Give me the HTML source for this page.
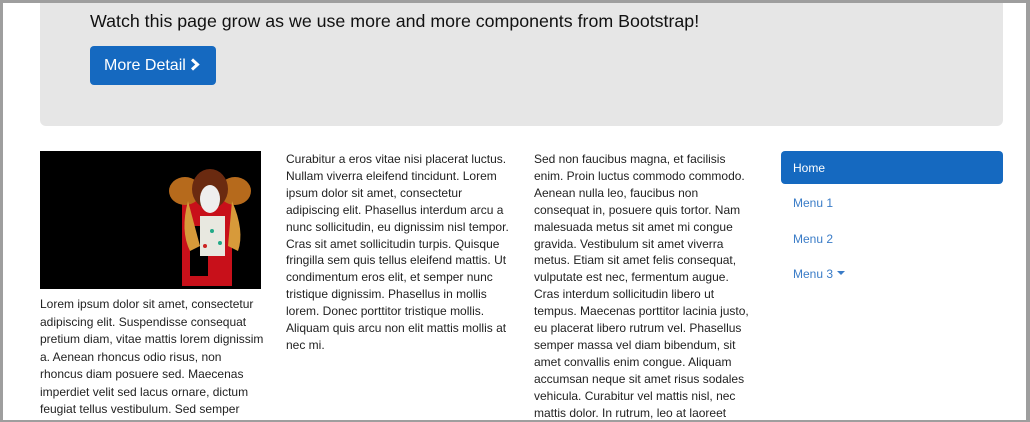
<!DOCTYPE html>
<html><head><style>
*{margin:0;padding:0;box-sizing:border-box}
body{width:1030px;height:422px;overflow:hidden;background:#fff;font-family:"Liberation Sans",Arial,sans-serif;position:relative}
.frame{position:absolute;inset:0;border:solid #9e9e9e;border-width:3px 4px 2px 3px;pointer-events:none;z-index:5}
.jumbo{position:absolute;left:40px;top:0;width:963px;height:126px;background:#e6e6e6;border-radius:0 0 6px 6px}
.jumbo h2{position:absolute;left:50px;top:11px;font-size:17.8px;font-weight:normal;color:#111;white-space:nowrap}
.btn{position:absolute;left:50px;top:46px;width:126px;height:39px;background:#1569c0;border-radius:4px;color:#fff;font-size:16px;line-height:39px;padding-left:14px}
.col{position:absolute;font-size:12px;line-height:16.9px;color:#222}
.img{position:absolute;left:40px;top:151px;width:221px;height:138px;background:#000;overflow:hidden}
.nav{position:absolute;left:781px;width:222px;font-size:12px}
.nav div{height:35.5px;line-height:35px;padding-left:12px;color:#3a7cc7}
.nav .act{background:#1569c0;color:#fff;border-radius:4px;height:33px;line-height:35px}
</style></head><body>
<div class="jumbo"><h2>Watch this page grow as we use more and more components from Bootstrap!</h2>
<div class="btn">More Detail <svg width="10" height="13" viewBox="0 0 10 13" style="vertical-align:-1px"><path d="M2 1.5 L7.5 6.5 L2 11.5" stroke="#fff" stroke-width="3" fill="none"/></svg></div></div>
<div class="img"><svg width="221" height="138">
<rect x="142" y="50" width="50" height="85" fill="#c8101a"/>
<rect x="150" y="75" width="18" height="50" fill="#000"/>
<ellipse cx="145" cy="40" rx="16" ry="14" fill="#b66a1c"/>
<ellipse cx="195" cy="40" rx="16" ry="14" fill="#b66a1c"/>
<path d="M148 50 Q140 80 150 100 L160 95 Z" fill="#d79a3a"/>
<path d="M192 50 Q205 80 198 100 L188 95 Z" fill="#d79a3a"/>
<ellipse cx="170" cy="38" rx="18" ry="20" fill="#6a2a10"/>
<ellipse cx="170" cy="48" rx="10" ry="14" fill="#eee"/>
<rect x="160" y="65" width="25" height="40" fill="#e8e8e0"/>
<circle cx="172" cy="80" r="2" fill="#2a8"/><circle cx="180" cy="92" r="2" fill="#2a8"/><circle cx="165" cy="95" r="2" fill="#c22"/>
</svg></div>
<div class="col" style="left:40px;top:296px;width:225px;line-height:17.5px">Lorem ipsum dolor sit amet, consectetur adipiscing elit. Suspendisse consequat pretium diam, vitae mattis lorem dignissim a. Aenean rhoncus odio risus, non rhoncus diam posuere sed. Maecenas imperdiet velit sed lacus ornare, dictum feugiat tellus vestibulum. Sed semper</div>
<div class="col" style="left:286px;top:151px;width:225px">Curabitur a eros vitae nisi placerat luctus. Nullam viverra eleifend tincidunt. Lorem ipsum dolor sit amet, consectetur adipiscing elit. Phasellus interdum arcu a nunc sollicitudin, eu dignissim nisl tempor. Cras sit amet sollicitudin turpis. Quisque fringilla sem quis tellus eleifend mattis. Ut condimentum eros elit, et semper nunc tristique dignissim. Phasellus in mollis lorem. Donec porttitor tristique mollis. Aliquam quis arcu non elit mattis mollis at nec mi.</div>
<div class="col" style="left:534px;top:151px;width:216px">Sed non faucibus magna, et facilisis enim. Proin luctus commodo commodo. Aenean nulla leo, faucibus non consequat in, posuere quis tortor. Nam malesuada metus sit amet mi congue gravida. Vestibulum sit amet viverra metus. Etiam sit amet felis consequat, vulputate est nec, fermentum augue. Cras interdum sollicitudin libero ut tempus. Maecenas porttitor lacinia justo, eu placerat libero rutrum vel. Phasellus semper massa vel diam bibendum, sit amet convallis enim congue. Aliquam accumsan neque sit amet risus sodales vehicula. Curabitur vel mattis nisl, nec mattis dolor. In rutrum, leo at laoreet</div>
<div class="nav" style="top:151px"><div class="act">Home</div><div style="margin-top:2px">Menu 1</div><div>Menu 2</div><div>Menu 3<svg width="8" height="5" viewBox="0 0 8 5" style="vertical-align:2px;margin-left:4px"><path d="M0 0 H8 L4 4 Z" fill="#3a7cc7"/></svg></div></div>
<div class="frame"></div>
</body></html>
